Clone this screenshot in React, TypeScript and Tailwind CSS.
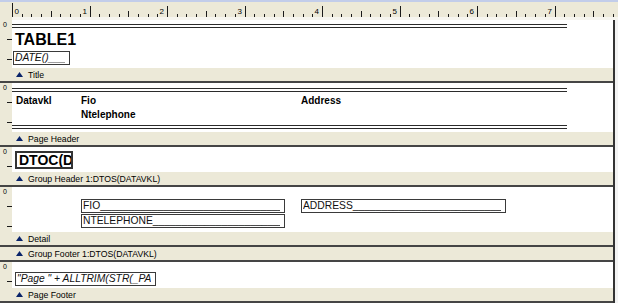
import React from "react";

const TICK = 77.5 / 8;

const TopRuler = () => {
  const ticks: React.ReactElement[] = [];
  const labels: React.ReactElement[] = [];
  for (let i = 0; i < 70; i++) {
    const x = Math.round(12 + i * TICK) + 0.5;
    if (x > 618) break;
    const k = i % 8;
    const top = i === 0 ? 1 : k === 0 ? 4 : k === 4 ? 9 : 12;
    ticks.push(<line key={i} x1={x} x2={x} y1={top} y2={15} stroke="#1a1a1a" strokeWidth={1} />);
    if (k === 0) {
      const n = i / 8;
      labels.push(
        <text key={"l" + i} x={n === 0 ? x + 2 : x - 8} y={12} fontSize={8} fill="#000">
          {n}
        </text>
      );
    }
  }
  return (
    <svg width={618} height={18} className="block" style={{ fontFamily: "'Liberation Sans', Arial, sans-serif" }}>
      <rect x={0} y={0} width={618} height={18} fill="#ece9d8" />
      <rect x={12} y={15} width={606} height={3} fill="#f6f5ef" />
      {ticks}
      {labels}
    </svg>
  );
};

const SideRuler = ({ h }: { h: number }) => {
  const ticks: React.ReactElement[] = [];
  for (let y = 19.4; y < h - 2; y += 19.4) {
    const yy = Math.round(y) + 0.5;
    ticks.push(<line key={y} x1={7} x2={12} y1={yy} y2={yy} stroke="#1a1a1a" />);
  }
  return (
    <svg width={12} height={h} className="block shrink-0" style={{ fontFamily: "'Liberation Sans', Arial, sans-serif" }}>
      <rect x={0} y={0} width={12} height={h} fill="#ece9d8" />
      <text x={3} y={7} fontSize={7} fill="#000">
        0
      </text>
      {ticks}
      <line x1={12.5} x2={12.5} y1={0} y2={h} stroke="#2a2a2a" />
    </svg>
  );
};

const Bar = ({ label }: { label: string }) => (
  <div className="h-[15px] bg-[#ece9d8] border-b-2 border-[#454545] flex items-center pl-[16px] gap-[5px]">
    <svg width={7} height={5} className="block">
      <polygon points="0,5 3.5,0 7,5" fill="#0a246a" />
    </svg>
    <span className="text-[8.7px] leading-none text-black pt-[1px]">{label}</span>
  </div>
);

const Band = ({ h, cls, children }: { h: number; cls: string; children?: React.ReactNode }) => (
  <div className={`flex ${cls}`}>
    <SideRuler h={h} />
    <div className="relative flex-1 bg-white overflow-hidden">{children}</div>
  </div>
);

const DoubleLine = ({ cls }: { cls: string }) => (
  <div className={`absolute left-0 w-[555px] h-[4px] border-y border-[#2b2b2b] ${cls}`} />
);

const Field = ({ cls, text, italic }: { cls: string; text: string; italic?: boolean }) => (
  <div className={`absolute border border-[#3a3a3a] bg-white pl-[1px] pr-[4px] flex items-center overflow-hidden ${cls}`}>
    <div className={`overflow-hidden whitespace-nowrap text-[10.3px] leading-none text-[#111] ${italic ? "italic" : ""}`}>
      {text}
      {"_".repeat(40)}
    </div>
  </div>
);

export default function App() {
  return (
    <div className="w-[618px] h-[303px] overflow-hidden bg-[#f3f3f3] font-['Liberation_Sans',Arial,sans-serif]">
      <div className="h-[2px] bg-[#c2cdea]" />
      <TopRuler />
      <div className="w-[615px] border-r-2 border-[#333]">
        <Band h={48} cls="h-[48px]">
          <DoubleLine cls="top-[4px]" />
          <div className="absolute left-[3px] top-[11px] text-[16px] leading-[18px] font-bold text-black">TABLE1</div>
          <Field cls="left-[1px] top-[31px] w-[57px] h-[14px]" text="DATE()" italic />
        </Band>
        <Bar label="Title" />

        <Band h={49} cls="h-[49px]">
          <DoubleLine cls="top-[5px]" />
          <div className="absolute left-[4px] top-[12px] text-[10px] leading-[12px] font-bold text-black">Datavkl</div>
          <div className="absolute left-[69px] top-[12px] text-[10px] leading-[12px] font-bold text-black">Fio</div>
          <div className="absolute left-[289px] top-[12px] text-[10px] leading-[12px] font-bold text-black">Address</div>
          <div className="absolute left-[69px] top-[26px] text-[10px] leading-[12px] font-bold text-black">Ntelephone</div>
          <DoubleLine cls="top-[42px]" />
        </Band>
        <Bar label="Page Header" />

        <Band h={25} cls="h-[25px]">
          <div className="absolute left-[3px] top-[4px] w-[58px] h-[18px] border-2 border-[#333] overflow-hidden pl-[2px]">
            <div className="text-[14px] leading-[14px] font-bold text-black whitespace-nowrap">DTOC(DATAVKL)</div>
          </div>
        </Band>
        <Bar label="Group Header 1:DTOS(DATAVKL)" />

        <Band h={45} cls="h-[45px]">
          <Field cls="left-[69px] top-[12px] w-[204px] h-[14px]" text="FIO" />
          <Field cls="left-[69px] top-[27px] w-[204px] h-[14px]" text="NTELEPHONE" />
          <Field cls="left-[289px] top-[12px] w-[205px] h-[14px]" text="ADDRESS" />
        </Band>
        <Bar label="Detail" />
        <Bar label="Group Footer 1:DTOS(DATAVKL)" />

        <Band h={26} cls="h-[26px]">
          <Field cls="left-[3px] top-[10px] w-[141px] h-[14px]" text={'"Page " + ALLTRIM(STR(_PAGENO))'} italic />
        </Band>
        <Bar label="Page Footer" />
      </div>
    </div>
  );
}
